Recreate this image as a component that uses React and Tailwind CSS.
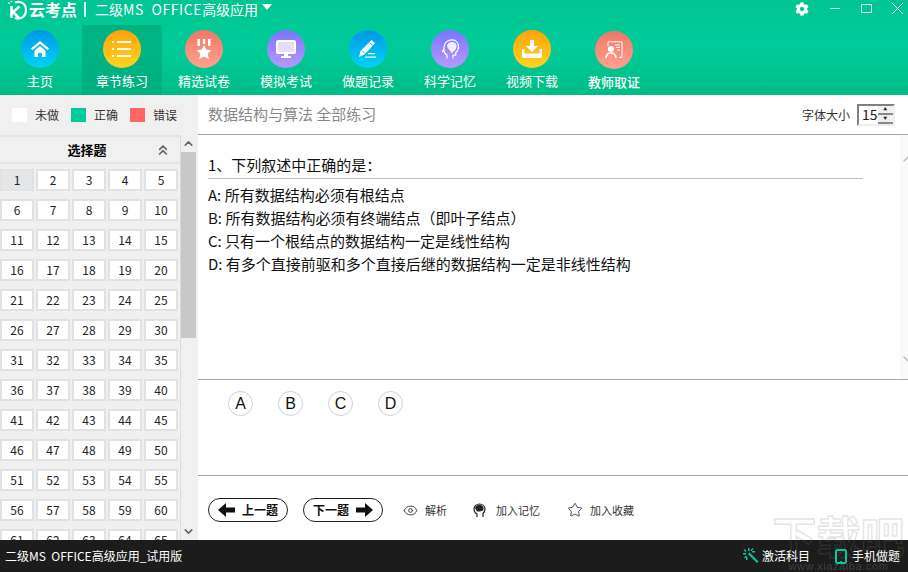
import { ChevronDown, ChevronUp, ChevronsUp, Eye, Star } from 'lucide-react';
import { FaCog } from 'react-icons/fa';

const font = "font-['Microsoft_YaHei','Noto_Sans_CJK_SC','Noto_Sans',sans-serif]";

const BLUE = 'bg-gradient-to-b from-[#0096e6] to-[#00d4f2]';
const ORANGE = 'bg-gradient-to-b from-[#ffa20a] to-[#ffd41f]';
const RED = 'bg-gradient-to-b from-[#ef7866] to-[#ffa18f]';
const PURPLE = 'bg-gradient-to-b from-[#7a74ff] to-[#b898ff]';

const HomeIcon = () => (
  <svg width="18" height="16" viewBox="0 0 18 16" fill="white">
    <path d="M9 0l9 7.500-1.500 1.500L9 3 1.500 9 0 7.500z" />
    <path d="M9 5l5.500 4.500V16H11v-4H7v4H3.500V9.500z" />
  </svg>
);

const ListIcon = () => (
  <svg width="20" height="18" viewBox="0 0 20 18" fill="white">
    <rect x="0" y="1" width="2" height="2" />
    <rect x="5" y="1" width="14" height="2" />
    <rect x="0" y="8" width="2" height="2" />
    <rect x="5" y="8" width="14" height="2" />
    <rect x="0" y="15" width="2" height="2" />
    <rect x="5" y="15" width="14" height="2" />
  </svg>
);

const MedalIcon = () => (
  <svg width="16" height="21" viewBox="0 0 16 21" fill="white">
    <rect x="1.500" y="0" width="2.500" height="7" />
    <rect x="6.800" y="0" width="2.500" height="5" />
    <rect x="12" y="0" width="2.500" height="7" />
    <path d="M8 6l2.300 4.500 5.200.7-3.800 3.600 1 5.200L8 17.500 3.300 20l1-5.200L.5 11.200l5.200-.7z" />
  </svg>
);

const MonitorIcon = () => (
  <svg width="20" height="18" viewBox="0 0 20 18">
    <rect x="1" y="1" width="18" height="12" rx="1" fill="#e6dcff" stroke="white" strokeWidth="2" />
    <rect x="8" y="13" width="4" height="3" fill="white" />
    <rect x="5" y="16" width="10" height="2" fill="white" />
  </svg>
);

const PencilIcon = () => (
  <svg width="20" height="20" viewBox="0 0 20 20">
    <path d="M13.500 1L17 4 7 15l-6 3 1.500-6z" fill="white" />
    <path d="M11.500 3.500l3.300 3M4 11.500l3 3" stroke="#19a5ea" strokeWidth="1" fill="none" />
    <rect x="10" y="14" width="7" height="1.200" fill="white" />
    <rect x="7" y="17.500" width="11" height="1.200" fill="white" />
  </svg>
);

const HeadIcon = () => (
  <svg width="17" height="20" viewBox="0 0 17 20" fill="none" stroke="white" strokeWidth="1.200">
    <path d="M5 19.500V16C2.500 14.500 1.500 12 2 8.500 2.500 3.500 6 .8 10 .8s6.500 3 6.500 7c0 3-1.500 5-2.800 6v2.400H11v3.300" />
    <path d="M5 6.500C6 3.500 8.500 2.500 11 3s4 2.500 3.500 5-2 4-3.500 4.500l-.5 1.500H9c.3-3-3.300-2.500-4-7.500z" fill="white" fillOpacity="0.85" stroke="none" />
    <path d="M2 10l-1.500 2.500h2" />
  </svg>
);

const DownloadIcon = () => (
  <svg width="20" height="18" viewBox="0 0 20 18" fill="white">
    <path d="M8 0h4v6h4l-6 6-6-6h4z" />
    <path d="M0 9h2.500v4.500h15V9H20v7a2 2 0 0 1-2 2H2a2 2 0 0 1-2-2z" />
  </svg>
);

const TeacherIcon = () => (
  <svg width="18" height="18" viewBox="0 0 18 18" fill="none" stroke="white" strokeWidth="1">
    <path d="M3 5V.8h14v15.500h-3" />
    <circle cx="6" cy="8" r="3" fill="white" stroke="none" />
    <path d="M1 17c.3-3.500 2.300-5 5-5s4.700 1.500 5 5" strokeWidth="1.500" />
    <path d="M10 4h5M11 6.500h4M12 9h3" />
  </svg>
);

const LogoIcon = () => (
  <svg width="22" height="20" viewBox="0 0 22 20" fill="none" stroke="white" strokeWidth="2.200">
    <path d="M9 2.500c5-2 11 .5 11 7.500s-6 10-11 8" />
    <path d="M5.500 6v12M13.500 6.500L7 12l6 6" strokeWidth="2.600" />
    <circle cx="3" cy="3" r="1" fill="white" stroke="none" />
    <circle cx="5.500" cy="1.500" r=".8" fill="white" stroke="none" />
  </svg>
);

const WandIcon = () => (
  <svg width="16" height="16" viewBox="0 0 16 16" fill="#00cc99">
    <path d="M5 6l1.500-1.500L15.500 13.500 14 15z" />
    <rect x="5" y="0" width="1.500" height="3" />
    <rect x="0" y="5" width="3" height="1.500" />
    <rect x="9" y="3" width="3" height="1.500" />
    <rect x="3" y="9" width="1.500" height="3" />
    <path d="M1.500 1l2 2-1 1-2-2zM9.500 0l1 1-2 2-1-1zM3 7.500l1 1-2 2-1-1z" />
  </svg>
);

const TabletIcon = () => (
  <svg width="12" height="15" viewBox="0 0 12 15" fill="none">
    <rect x="1" y="1" width="10" height="13" rx="1.500" stroke="#00cc99" strokeWidth="2" />
    <rect x="5" y="12" width="2" height="1" fill="#0b6" />
  </svg>
);

const ArrowIcon = ({ flip }) => (
  <svg width="17" height="14" viewBox="0 0 17 14" fill="#111" className={flip ? 'rotate-180' : ''}>
    <path d="M0 7l8-7v4.500h9v5H8V14z" />
  </svg>
);

const navItems = [
  { label: '主页', bg: BLUE, icon: <HomeIcon /> },
  { label: '章节练习', bg: ORANGE, icon: <ListIcon />, active: true },
  { label: '精选试卷', bg: RED, icon: <MedalIcon /> },
  { label: '模拟考试', bg: PURPLE, icon: <MonitorIcon /> },
  { label: '做题记录', bg: BLUE, icon: <PencilIcon /> },
  { label: '科学记忆', bg: PURPLE, icon: <HeadIcon /> },
  { label: '视频下载', bg: ORANGE, icon: <DownloadIcon /> },
  { label: '教师取证', bg: RED, icon: <TeacherIcon />, low: true },
];

const numbers = Array.from({ length: 65 }, (_, i) => i + 1);

const Header = () => (
  <header className="h-[95px] shrink-0 flex flex-col bg-gradient-to-b from-[#00c592] via-[#00cc99] to-[#00bc86] text-white">
    <div className="h-[25px] flex items-center pb-[6px]">
      <div className="ml-[6px]"><LogoIcon /></div>
      <span className="ml-[1px] text-[16px] font-bold leading-[19px]">云考点</span>
      <span className="ml-[7px] w-[2px] h-[15px] bg-white/90" />
      <span className="ml-[9px] text-[14px] leading-[19px] whitespace-pre">
        二级<span className="tracking-[0.6px]">MS  OFFICE</span>高级应用
      </span>
      <svg width="12" height="8" viewBox="0 0 12 8" className="ml-[3px] mb-[5px]" fill="white"><path d="M1 1h10L6 7z" /></svg>
      <div className="ml-auto flex items-center mb-[2px]">
        <FaCog size={14} />
        <span className="ml-[21px] w-[10px] h-[1.500px] bg-white/90" />
        <span className="ml-[21px] w-[11px] h-[9px] border-[1.500px] border-white/90" />
        <svg width="11" height="11" viewBox="0 0 11 11" className="ml-[20px] mr-[5px]" stroke="white" strokeWidth="1"><path d="M0 0l11 11M11 0L0 11" /></svg>
      </div>
    </div>
    <nav className="flex gap-[2px] flex-1">
      {navItems.map((item) => (
        <div key={item.label} className={`w-[80px] flex flex-col items-center pt-[5px] ${item.active ? 'bg-[#00ad7d]/80' : ''}`}>
          <div className={`w-[38px] h-[38px] rounded-full flex items-center justify-center ${item.bg} ${item.low ? 'mt-[1px]' : ''}`}>
            {item.icon}
          </div>
          <span className={`text-[13px] leading-[18px] mt-[4px] ${item.low ? 'font-medium' : ''}`}>{item.label}</span>
        </div>
      ))}
    </nav>
  </header>
);

const Legend = ({ color, label }) => (
  <div className="flex items-center gap-[8px]">
    <span className={`w-[15px] h-[14px] ${color}`} />
    <span className="text-[12px] text-[#333]">{label}</span>
  </div>
);

const Sidebar = () => (
  <aside className="w-[198px] shrink-0 bg-[#f0f0f0] flex flex-col overflow-hidden">
    <div className="h-[40px] shrink-0 flex items-center pl-[12px] gap-[12px]">
      <Legend color="bg-white" label="未做" />
      <Legend color="bg-[#00cc99]" label="正确" />
      <Legend color="bg-[#ff6666]" label="错误" />
    </div>
    <div className="flex flex-1 min-h-0">
      <div className="w-[181px] shrink-0 border-r border-[#dcdcdc]">
        <div className="h-[29px] border-y-2 border-[#e4e4e4] flex items-center relative">
          <span className="w-full text-center text-[13px] font-bold text-black pr-[6px]">选择题</span>
          <ChevronsUp size={16} className="absolute right-[9px] text-[#666]" strokeWidth={2.5} />
        </div>
        <div className="grid grid-cols-[repeat(5,34px)] gap-x-[2px] gap-y-[8px] mt-[5px]">
          {numbers.map((n) => (
            <div
              key={n}
              className={`h-[22px] border-2 border-[#e2e2e2] flex items-center justify-center text-[12px] text-[#222] ${n === 1 ? 'bg-[#e4e6e8]' : 'bg-white'}`}
            >
              {n}
            </div>
          ))}
        </div>
      </div>
      <div className="w-[15px] flex flex-col items-center">
        <ChevronUp size={13} strokeWidth={3} className="text-[#666] h-[17px]" />
        <div className="w-full h-[186px] bg-[#c8c8c8]" />
        <div className="flex-1" />
        <ChevronDown size={13} strokeWidth={3} className="text-[#666] h-[13px] mb-[2px]" />
      </div>
    </div>
  </aside>
);

const Question = () => (
  <div className="h-[245px] shrink-0 border-b border-[#a6a6a6] flex">
    <div className="flex-1 pl-[10px] pt-[20px]">
      <div className="w-[655px] h-[24px] border-b border-[#bdbdbd] text-[15px] leading-[20px] text-[#111]">1、下列叙述中正确的是：</div>
      <div className="mt-[4px] text-[15px] leading-[23px] text-[#111]">
        <p>A: 所有数据结构必须有根结点</p>
        <p>B: 所有数据结构必须有终端结点（即叶子结点）</p>
        <p>C: 只有一个根结点的数据结构一定是线性结构</p>
        <p>D: 有多个直接前驱和多个直接后继的数据结构一定是非线性结构</p>
      </div>
    </div>
    <div className="w-[8px] bg-[#fafafa] flex flex-col justify-between pt-[16px] pb-[12px] overflow-hidden">
      <ChevronUp size={16} strokeWidth={2} className="text-[#bbb] shrink-0" />
      <ChevronDown size={16} strokeWidth={2} className="text-[#bbb] shrink-0" />
    </div>
  </div>
);

const Answers = () => (
  <div className="h-[96px] shrink-0 border-b border-[#a6a6a6] flex gap-[25px] pl-[30px] pt-[11px]">
    {['A', 'B', 'C', 'D'].map((o) => (
      <div key={o} className="w-[25px] h-[25px] rounded-full border border-[#d0d0d0] flex items-center justify-center font-['Liberation_Sans',sans-serif] text-[16px] text-[#111]">
        {o}
      </div>
    ))}
  </div>
);

const Toolbar = () => (
  <div className="flex-1 flex items-start pt-[22px] pl-[10px] overflow-hidden">
    <button className="w-[80px] h-[24px] rounded-full border border-[#222] flex items-center justify-center gap-[7px] text-[12px] font-bold text-[#111]">
      <ArrowIcon /> 上一题
    </button>
    <button className="ml-[15px] w-[80px] h-[24px] rounded-full border border-[#222] flex items-center justify-center gap-[7px] text-[12px] font-bold text-[#111]">
      下一题 <ArrowIcon flip />
    </button>
    <div className="ml-[20px] h-[24px] flex items-center gap-[7px] text-[11px] text-[#333]">
      <Eye size={15} strokeWidth={1.5} /> 解析
    </div>
    <div className="ml-[26px] h-[24px] flex items-center gap-[10px] text-[11px] text-[#333]">
      <svg width="13" height="15" viewBox="0 0 13 15" fill="none" stroke="#222" strokeWidth="1.200">
        <path d="M4 14v-3C1.500 9.500 1 7.500 1 6c0-3 2.500-5 5.500-5S12 3 12 6c0 2-1 3.500-2 4.500V14" />
        <path d="M2 5c1-3 4-3.500 6-3s3.500 3 2 5.500l-3 1H4z" fill="#222" stroke="none" />
      </svg>
      加入记忆
    </div>
    <div className="ml-[27px] h-[24px] flex items-center gap-[7px] text-[11px] text-[#333]">
      <Star size={16} strokeWidth={1.3} /> 加入收藏
    </div>
  </div>
);

const Watermark = () => (
  <div className="absolute left-[771px] top-[510px] w-[135px] pointer-events-none flex flex-col items-center">
    <span className="text-[44px] leading-[50px] font-bold text-transparent whitespace-nowrap [-webkit-text-stroke:1.5px_rgba(120,120,120,0.2)]">下载吧</span>
    <span className="mt-[1px] text-[11px] leading-[10px] tracking-[0.6px] text-[#78787866] font-['Liberation_Sans',sans-serif]">www.xiazaiba.com</span>
  </div>
);

export default function App() {
  return (
    <div className={`w-[908px] h-[572px] flex flex-col overflow-hidden bg-white relative ${font}`}>
      <Header />
      <div className="flex flex-1 min-h-0">
        <Sidebar />
        <main className="flex-1 flex flex-col min-w-0">
          <div className="h-[40px] shrink-0 border-b border-[#a6a6a6] flex items-center pl-[10px] pr-[13px]">
            <span className="text-[15px] text-[#888]">数据结构与算法 全部练习</span>
            <span className="ml-auto text-[12px] text-[#333]">字体大小</span>
            <div className="ml-[7px] w-[38px] h-[22px] border-2 border-t-[#808080] border-l-[#808080] border-r-[#eee] border-b-[#eee] flex items-center pl-[3px] text-[14px] text-[#222]">
              15
              <div className="ml-auto w-[16px] h-full flex flex-col">
                <div className="flex-1 bg-[#f0f0f0] border-b-2 border-[#888] flex items-center justify-center text-[4px] leading-none">▲</div>
                <div className="flex-1 bg-[#f0f0f0] border-b-2 border-[#888] flex items-center justify-center text-[4px] leading-none">▼</div>
              </div>
            </div>
          </div>
          <Question />
          <Answers />
          <Toolbar />
        </main>
      </div>
      <footer className="h-[32px] shrink-0 bg-[#1c1c1c] flex items-center pl-[5px] pr-[8px] text-white text-[12px]">
        <span className="whitespace-pre">二级MS  OFFICE高级应用_试用版</span>
        <span className="ml-auto"><WandIcon /></span>
        <span className="ml-[3px]">激活科目</span>
        <span className="ml-[25px]"><TabletIcon /></span>
        <span className="ml-[5px]">手机做题</span>
      </footer>
      <Watermark />
    </div>
  );
}
